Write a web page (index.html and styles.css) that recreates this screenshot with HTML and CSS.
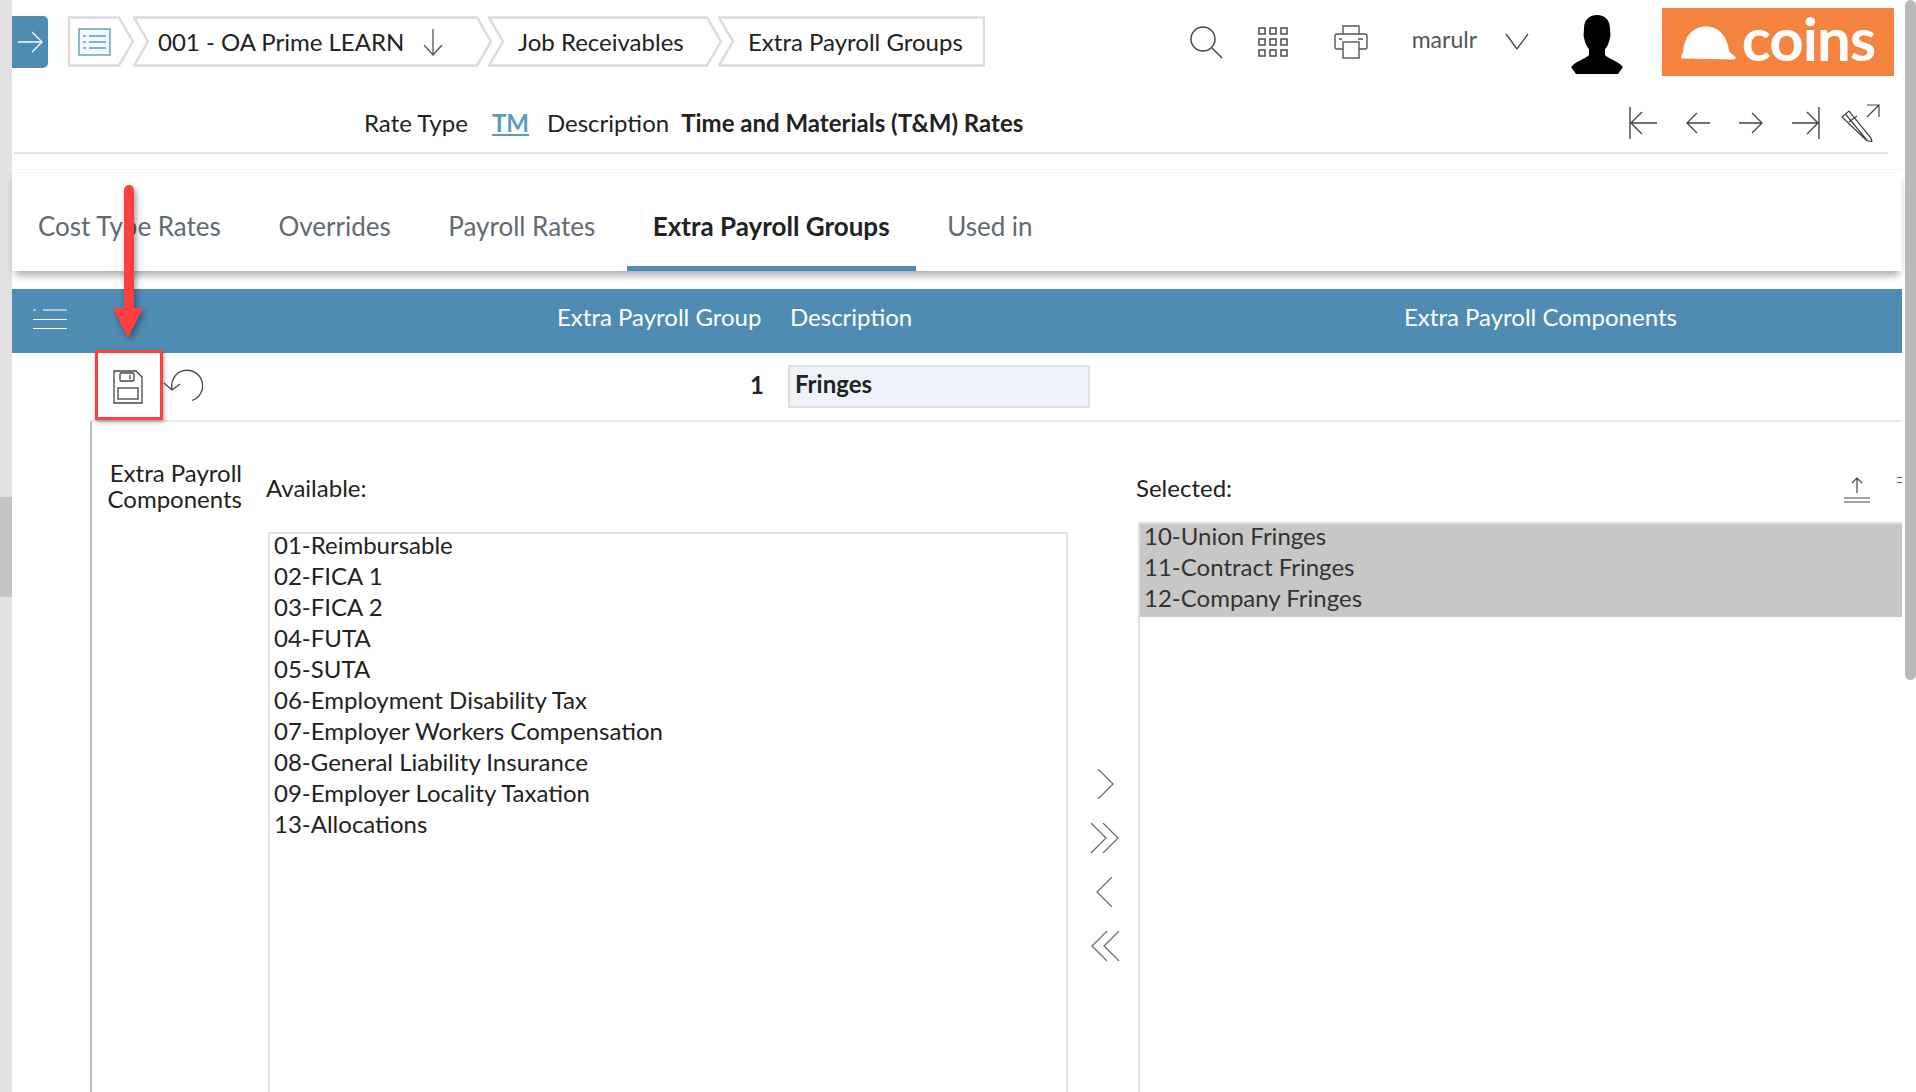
FILE: index.html
```html
<!doctype html>
<html lang="en">
<head>
    <meta charset="utf-8">
    <title>Extra Payroll Groups</title>
    <link rel="stylesheet" href="styles.css">
</head>
<body>
<div class="page">
    <div class="strip"><div class="strip-thumb"></div></div>
    <div class="main">
        <div class="topbar">
            <div class="side-btn">
                <svg width="26" height="26" viewBox="0 0 26 26" fill="none" stroke="#fff" stroke-width="1.3"><path d="M1 13h24M15 3l10 10-10 10"/></svg>
            </div>
            <div class="crumbs">
                <div class="crumb crumb-first">
                    <svg class="crumb-shape" viewBox="0 0 66 51" preserveAspectRatio="none"><path d="M1 1.5h50l14 24-14 24H1z"/></svg>
                    <svg class="crumb-list" width="34" height="28" viewBox="0 0 34 28" fill="none" stroke="#5b9bc4" stroke-width="1.4"><rect x="1" y="1" width="31" height="26" fill="#f2f8fc"/><path d="M5 8h3M11 8h17M5 14h3M11 14h17M5 20h3M11 20h17"/></svg>
                </div>
                <div class="crumb crumb-job">
                    <svg class="crumb-shape" viewBox="0 0 360 51" preserveAspectRatio="none"><path d="M1 1.5h343l14 24-14 24H1l14-24z"/></svg>
                    <span>001 - OA Prime LEARN</span>
                    <svg class="crumb-down" width="22" height="30" viewBox="0 0 22 30" fill="none" stroke="#555" stroke-width="1.3"><path d="M11 2v25M2 18l9 10 9-10"/></svg>
                </div>
                <div class="crumb crumb-recv">
                    <svg class="crumb-shape" viewBox="0 0 235 51" preserveAspectRatio="none"><path d="M1 1.5h218l14 24-14 24H1l14-24z"/></svg>
                    <span>Job Receivables</span>
                </div>
                <div class="crumb crumb-extra">
                    <svg class="crumb-shape" viewBox="0 0 267 51" preserveAspectRatio="none"><path d="M1 1.5h265v48H1l14-24z"/></svg>
                    <span>Extra Payroll Groups</span>
                </div>
            </div>
            <div class="tools">
                <svg class="tool-search" width="34" height="34" viewBox="0 0 34 34" fill="none" stroke="#444" stroke-width="1.4"><circle cx="14" cy="14" r="12"/><path d="M23 23l10 10"/></svg>
                <svg class="tool-grid" width="30" height="30" viewBox="0 0 30 30" fill="none" stroke="#555" stroke-width="1.6"><rect x="1" y="1" width="6" height="6"/><rect x="12" y="1" width="6" height="6"/><rect x="23" y="1" width="6" height="6"/><rect x="1" y="12" width="6" height="6"/><rect x="12" y="12" width="6" height="6"/><rect x="23" y="12" width="6" height="6"/><rect x="1" y="23" width="6" height="6"/><rect x="12" y="23" width="6" height="6"/><rect x="23" y="23" width="6" height="6"/></svg>
                <svg class="tool-print" width="34" height="34" viewBox="0 0 34 34" fill="none" stroke="#555" stroke-width="1.4"><path d="M9 9V1h16v8M9 24H3a2 2 0 0 1-2-2V11a2 2 0 0 1 2-2h28a2 2 0 0 1 2 2v11a2 2 0 0 1-2 2h-6"/><rect x="9" y="17" width="16" height="16"/><path d="M5 14h3M24 14h5"/></svg>
                <span class="user">marulr</span>
                <svg class="tool-caret" width="24" height="18" viewBox="0 0 24 18" fill="none" stroke="#444" stroke-width="1.3"><path d="M1 1l11 15L23 1"/></svg>
                <svg class="avatar" width="54" height="60" viewBox="0 0 54 60" fill="#000"><path d="M27 1c8 0 13 5 13 14 0 3 1 6 0 9-1 5-3 9-5 11v6c3 3 11 6 15 9l3 3-5 7H6l-5-7 3-3c4-3 12-6 15-9v-6c-2-2-4-6-5-11-1-3 0-6 0-9C14 6 19 1 27 1z"/></svg>
                <div class="logo">
                    <svg width="56" height="36" viewBox="0 0 58 36" fill="#fff"><path d="M2 29C3 13 12 2 26 2c13 0 22 10 24 26l7 6c0 1-1 2-3 2L4 35c-2 0-4 0-4-1s1-4 2-5z"/></svg>
                    <span>coins</span>
                </div>
            </div>
        </div>

        <div class="detail">
            <div class="detail-text">
                <span class="detail-label">Rate Type</span>
                <a class="detail-link">TM</a>
                <span>Description</span>
                <b>Time and Materials (T&amp;M) Rates</b>
            </div>
            <div class="pager">
                <svg width="30" height="32" viewBox="0 0 30 32" fill="none" stroke="#444" stroke-width="1.4"><path d="M2 0v32M29 16H3M14 5L3 16l11 11"/></svg>
                <svg width="26" height="24" viewBox="0 0 26 24" fill="none" stroke="#444" stroke-width="1.3"><path d="M25 12H2M12 2L2 12l10 10"/></svg>
                <svg width="26" height="24" viewBox="0 0 26 24" fill="none" stroke="#444" stroke-width="1.3"><path d="M1 12h23M14 2l10 10-10 10"/></svg>
                <svg width="30" height="32" viewBox="0 0 30 32" fill="none" stroke="#444" stroke-width="1.4"><path d="M28 0v32M1 16h26M16 5l11 11-11 11"/></svg>
                <svg class="pager-edit" width="40" height="38" viewBox="0 0 40 38" fill="none" stroke="#444" stroke-width="1.2"><path d="M1 13l7-6 22 27 1 4-6-2zM4.500 10l22 27M8 18l8-6M26 1h12v12M38 1L26 13"/></svg>
            </div>
        </div>

        <div class="tabs">
            <div class="tab">Cost Type Rates</div>
            <div class="tab">Overrides</div>
            <div class="tab">Payroll Rates</div>
            <div class="tab tab-active">Extra Payroll Groups</div>
            <div class="tab">Used in</div>
        </div>

        <div class="grid-head">
            <svg width="34" height="20" viewBox="0 0 34 20" fill="none" stroke="#fff" stroke-width="1.2"><path d="M0 1h3M10 1h24M0 10.500h34M0 19.500h34"/></svg>
            <span class="head-group">Extra Payroll Group</span>
            <span class="head-desc">Description</span>
            <span class="head-comp">Extra Payroll Components</span>
        </div>

        <div class="grid-row">
            <div class="row-actions">
                <svg class="icon-save" width="30" height="34" viewBox="0 0 30 34" fill="none" stroke="#444" stroke-width="1.3"><path d="M1 1h22l6 6v26H1z"/><rect x="7" y="3" width="14" height="8" rx="1"/><path d="M17 5v4"/><rect x="5" y="18" width="20" height="11"/></svg>
                <svg class="icon-undo" width="40" height="34" viewBox="0 0 40 34" fill="none" stroke="#444" stroke-width="1.3"><path d="M29 32.500A15.500 15.500 0 1 0 9 21M1 15l8 7 8-6"/></svg>
            </div>
            <span class="row-num">1</span>
            <div class="row-input">Fringes</div>
        </div>

        <div class="form">
            <div class="form-label">Extra Payroll<br>Components</div>
            <div class="avail">
                <div class="col-title">Available:</div>
                <div class="listbox">
                    <div>01-Reimbursable</div>
                    <div>02-FICA 1</div>
                    <div>03-FICA 2</div>
                    <div>04-FUTA</div>
                    <div>05-SUTA</div>
                    <div>06-Employment Disability Tax</div>
                    <div>07-Employer Workers Compensation</div>
                    <div>08-General Liability Insurance</div>
                    <div>09-Employer Locality Taxation</div>
                    <div>13-Allocations</div>
                </div>
            </div>
            <div class="movers">
                <svg width="18" height="30" viewBox="0 0 18 30" fill="none" stroke="#666" stroke-width="1.2"><path d="M2 0l15 15L2 30"/></svg>
                <svg width="30" height="30" viewBox="0 0 30 30" fill="none" stroke="#666" stroke-width="1.2"><path d="M1 0l15 15L1 30M13 0l15 15-15 15"/></svg>
                <svg width="18" height="30" viewBox="0 0 18 30" fill="none" stroke="#666" stroke-width="1.2"><path d="M16 0L1 15l15 15"/></svg>
                <svg width="30" height="30" viewBox="0 0 30 30" fill="none" stroke="#666" stroke-width="1.2"><path d="M17 0L2 15l15 15M29 0L14 15l15 15"/></svg>
            </div>
            <div class="sel">
                <div class="sel-head">
                    <div class="col-title">Selected:</div>
                    <svg class="icon-upload" width="28" height="26" viewBox="0 0 28 26" fill="none" stroke="#444" stroke-width="1.2"><path d="M14 1v15M9 6l5-5 5 5M1 21h26M1 25h26"/></svg>
                    <span class="sel-mark"></span>
                </div>
                <div class="listbox listbox-sel">
                    <div class="picked">
                        <div>10-Union Fringes</div>
                        <div>11-Contract Fringes</div>
                        <div>12-Company Fringes</div>
                    </div>
                </div>
            </div>
        </div>

        <div class="callout">
            <div class="callout-stem"></div>
            <div class="callout-head"></div>
        </div>
        <div class="callout-box"></div>
    </div>
    <div class="scrollbar"><div class="scroll-thumb"></div></div>
</div>
</body>
</html>
```

FILE: styles.css
```css
html, body {
    margin: 0;
    height: 100%;
    overflow: hidden;
}

body {
    font-family: Lato, "Open Sans", sans-serif;
    font-size: 24px;
    color: #222;
    background: #fff;
}

svg {
    display: block;
    flex: none;
}

.page {
    display: flex;
    height: 1092px;
    overflow: hidden;
}

.strip {
    width: 12px;
    flex: none;
    background: #e2e2e2;
    padding-top: 497px;
    box-sizing: border-box;
}

.strip-thumb {
    height: 100px;
    background: #c4c4c4;
}

.main {
    position: relative;
    flex: 1;
    min-width: 0;
}

.scrollbar {
    width: 14px;
    flex: none;
    background: #fff;
}

.scroll-thumb {
    width: 11px;
    height: 680px;
    margin-left: 3px;
    background: #b9b9b9;
    border-radius: 6px;
}

/* top bar */
.topbar {
    display: flex;
    align-items: flex-start;
    height: 98px;
}

.side-btn {
    width: 36px;
    height: 52px;
    margin-top: 16px;
    flex: none;
    display: flex;
    align-items: center;
    justify-content: center;
    background: #4f8cb3;
    border-radius: 0 5px 5px 0;
}

.crumbs {
    display: flex;
    margin: 16px 0 0 20px;
}

.crumb {
    position: relative;
    height: 51px;
    display: flex;
    align-items: center;
    font-size: 24px;
    color: #222;
}

.crumb span {
    position: relative;
}

.crumb-shape {
    position: absolute;
    left: 0;
    top: 0;
    width: 100%;
    height: 100%;
    fill: #fff;
    stroke: #dcdcdc;
    stroke-width: 2.5;
}

.crumb-first {
    width: 66px;
    padding-left: 10px;
    box-sizing: border-box;
}

.crumb-list {
    position: relative;
}

.crumb-job {
    width: 360px;
    margin-left: -1px;
    padding-left: 25px;
    box-sizing: border-box;
}

.crumb-down {
    position: relative;
    margin-left: 18px;
}

.crumb-recv {
    width: 235px;
    margin-left: -5px;
    padding-left: 30px;
    box-sizing: border-box;
}

.crumb-extra {
    width: 267px;
    margin-left: -5px;
    padding-left: 30px;
    box-sizing: border-box;
}

.tools {
    display: flex;
    align-items: center;
    height: 68px;
    margin: 8px 0 0 auto;
    padding-right: 8px;
}

.tool-grid {
    margin-left: 35px;
}

.tool-print {
    margin-left: 46px;
}

.user {
    margin-left: 44px;
    font-size: 23px;
    color: #555;
    position: relative;
    top: -3px;
}

.tool-caret {
    margin-left: 28px;
}

.avatar {
    margin-left: 41px;
    margin-top: 4px;
}

.logo {
    width: 232px;
    height: 68px;
    margin-left: 38px;
    display: flex;
    align-items: center;
    justify-content: center;
    gap: 5px;
    background: #f58441;
    color: #fff;
}

.logo span {
    font-size: 60px;
    font-weight: 700;
    line-height: 68px;
    letter-spacing: -1px;
    position: relative;
    top: -4px;
}

/* record line */
.detail {
    display: flex;
    align-items: center;
    height: 54px;
    margin-left: 2px;
    margin-right: 14px;
    border-bottom: 2px solid #e6e6e6;
}

.detail-text {
    display: flex;
    align-items: baseline;
    gap: 12px;
    padding-left: 350px;
    position: relative;
    top: -3px;
}

.detail-label {
    margin-right: 12px;
}

.detail-link {
    color: #5b9bc4;
    text-decoration: underline;
    font-weight: 700;
    margin-right: 6px;
}

.pager {
    display: flex;
    align-items: center;
    gap: 27px;
    margin-left: auto;
    margin-bottom: 5px;
    padding-right: 7px;
}

.pager-edit {
    margin-left: -7px;
}

/* tabs */
.tabs {
    display: flex;
    gap: 5.6px;
    height: 102px;
    margin-top: 15px;
    box-shadow: 0 7px 8px -3px rgba(0, 0, 0, 0.35);
    border-top: 1px solid #f4f4f4;
    box-sizing: border-box;
    position: relative;
}

.tab {
    display: flex;
    align-items: center;
    padding: 10px 26px 0;
    font-size: 26px;
    color: #5f6a72;
}

.tab-active {
    color: #222;
    font-weight: 700;
    border-bottom: 5px solid #4f8cb3;
    padding-top: 15px;
    box-sizing: border-box;
}

/* grid */
.grid-head {
    position: relative;
    display: flex;
    align-items: center;
    height: 64px;
    margin-top: 18px;
    padding-left: 21px;
    padding-bottom: 4px;
    box-sizing: border-box;
    background: #4f8cb3;
    color: #fff;
}

.grid-head span {
    margin-bottom: 6px;
}

.head-group {
    margin-left: 490px;
    width: 226px;
    flex: none;
}

.head-desc {
    margin-left: 7px;
    width: 614px;
    flex: none;
}

.grid-row {
    display: flex;
    align-items: center;
    height: 67px;
    border-bottom: 2px solid #e8e8e8;
    margin-left: 78px;
}

.row-actions {
    display: flex;
    align-items: center;
    width: 140px;
    flex: none;
    padding-left: 23px;
    box-sizing: border-box;
}

.icon-undo {
    margin-left: 20px;
    margin-top: -4px;
}

.row-num {
    width: 534px;
    flex: none;
    margin-bottom: 5px;
    text-align: right;
    font-weight: 700;
    color: #222;
}

.row-input {
    width: 302px;
    height: 43px;
    margin-left: 24px;
    padding-left: 5px;
    box-sizing: border-box;
    line-height: 34px;
    background: #eef3fa;
    border: 2px solid #e0e0e0;
    font-weight: 700;
    color: #222;
}

.form {
    display: flex;
    margin-left: 78px;
    height: 700px;
    padding-top: 1px;
    border-left: 2px solid #bbb;
}

.form-label {
    width: 150px;
    flex: none;
    padding-top: 37px;
    text-align: right;
    line-height: 26px;
    box-sizing: border-box;
}

.avail {
    width: 800px;
    flex: none;
    margin-left: 26px;
}

.col-title {
    line-height: 30px;
}

.avail .col-title {
    padding-top: 50px;
    height: 80px;
    box-sizing: border-box;
    line-height: 30px;
    margin-bottom: 29px;
    margin-left: -2px;
}

.listbox {
    height: 800px;
    padding: 1px 4px;
    border: 2px solid #e0e0e0;
    box-sizing: border-box;
    line-height: 31px;
    color: #222;
}

.listbox > div:first-child {
    margin-top: -6px;
}

.movers {
    width: 70px;
    flex: none;
    display: flex;
    flex-direction: column;
    align-items: center;
    gap: 24px;
    padding-top: 346px;
    padding-left: 4px;
    box-sizing: border-box;
}

.sel {
    flex: 1;
    min-width: 0;
    margin-right: 0;
}

.sel-head {
    display: flex;
    align-items: center;
    height: 99px;
    padding-top: 30px;
    box-sizing: border-box;
}

.sel-head .col-title {
    margin-left: -2px;
}

.icon-upload {
    margin-left: auto;
    margin-right: 26px;
    margin-top: 4px;
}

.sel-mark {
    width: 5px;
    height: 4px;
    border-top: 1px solid #555;
    border-bottom: 1px solid #555;
    margin: 0 0 16px;
}

.listbox-sel {
    padding: 0;
    border-right: 0;
    border-bottom: 0;
}

.listbox-sel > .picked:first-child {
    margin-top: 0;
    display: flow-root;
}

.picked {
    height: 93px;
    padding: 0 4px;
    line-height: 31px;
    background: #c7c7c7;
    color: #333;
}

.picked div:first-child {
    margin-top: -4px;
}

/* annotation */
.callout {
    position: absolute;
    left: 101px;
    top: 185px;
    filter: drop-shadow(2px 3px 3px rgba(0, 0, 0, 0.4));
}

.callout-stem {
    width: 10px;
    height: 123px;
    margin-left: 11px;
    background: #fa4040;
    border-radius: 5px 5px 0 0;
}

.callout-head {
    width: 0;
    height: 0;
    border-left: 15px solid transparent;
    border-right: 15px solid transparent;
    border-top: 30px solid #fa4040;
}

.callout-box {
    position: absolute;
    left: 83px;
    top: 350px;
    width: 68px;
    height: 70px;
    box-sizing: border-box;
    border: 3px solid #fa4040;
    box-shadow: 1px 2px 4px rgba(0, 0, 0, 0.35);
}
```
